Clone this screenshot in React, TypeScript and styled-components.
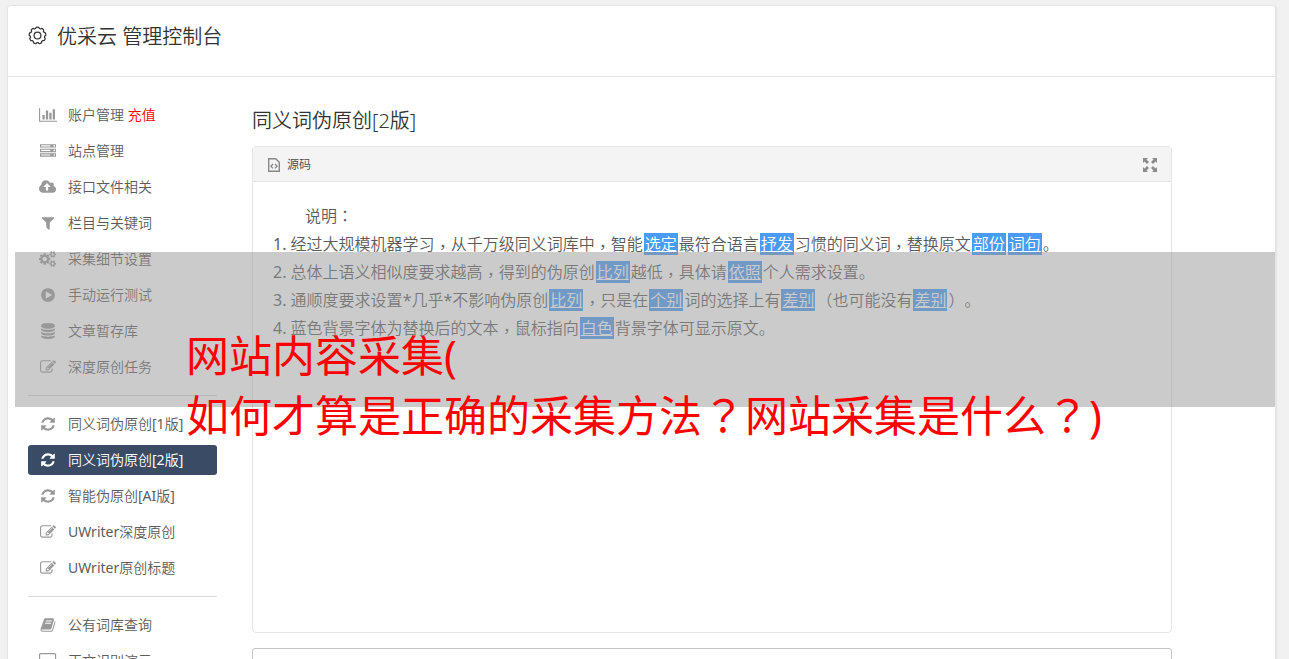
import React from "react";
import styled, { createGlobalStyle } from "styled-components";

const Global = createGlobalStyle`
  * { box-sizing: border-box; }
  html, body, #root { height: 100%; }
  body {
    margin: 0;
    overflow: hidden;
    background: #f1f1f1;
    color: #5c5c5c;
    font-family: "Noto Sans", "Noto Sans CJK SC", sans-serif;
    font-size: 14px;
    font-weight: 350;
    text-spacing-trim: space-all;
  }
`;

const Page = styled.div`
  height: 100%;
  padding: 5px 12px 0 7px;
  overflow: hidden;
`;

const Panel = styled.div`
  min-height: 100%;
  background: #fff;
  border: 1px solid #e5e5e5;
  border-right-width: 2px;
  border-radius: 4px 4px 0 0;
`;

const Header = styled.header`
  display: flex;
  align-items: flex-start;
  gap: 10px;
  height: 71px;
  padding: 16px 20px;
  border-bottom: 1px solid #e5e5e5;
  color: #333;
`;

const HeaderIcon = styled.svg`
  width: 19px;
  height: 27px;
`;

const Title = styled.h1`
  margin: 0;
  font-size: 20px;
  line-height: 30px;
  font-weight: 350;
`;

const Body = styled.div`
  display: flex;
  gap: 35px;
  padding: 23px 103px 0 20px;
`;

const Sidebar = styled.nav`
  flex: 0 0 189px;
`;

const Menu = styled.ul`
  display: flex;
  flex-direction: column;
  gap: 6px;
  margin: 0;
  padding: 0;
  list-style: none;

  & + & {
    margin-top: 13px;
    padding-top: 13px;
    border-top: 1px solid #d9d9d9;
  }
`;

const MenuLink = styled.a<{ $active?: boolean }>`
  display: flex;
  align-items: center;
  gap: 10px;
  height: 30px;
  padding: 0 10px;
  border-radius: 3px;
  background: ${(p) => (p.$active ? "#3a4b66" : "transparent")};
  color: ${(p) => (p.$active ? "#fff" : "#5c5c5c")};
  text-decoration: none;
  white-space: nowrap;

  svg { color: ${(p) => (p.$active ? "#fff" : "#999")}; }
`;

const Label = styled.span`
  padding-bottom: 2px;
`;

const IconBox = styled.span`
  display: flex;
  flex: 0 0 20px;
  justify-content: center;
  svg { height: 16px; fill: currentColor; }
`;

const Accent = styled.span`
  color: #f00;
`;

const Main = styled.main`
  flex: 1;
  min-width: 0;
`;

const SectionTitle = styled.h2`
  margin: 6px 0 10px;
  color: #333;
  font-size: 20px;
  line-height: 30px;
  font-weight: 350;
`;

const Editor = styled.section`
  border: 1px solid #e5e5e5;
  border-radius: 4px;
`;

const Toolbar = styled.div`
  display: flex;
  justify-content: space-between;
  align-items: center;
  height: 35px;
  padding: 0 13px 0 14px;
  background: #f4f4f4;
  border-bottom: 1px solid #e5e5e5;
`;

const ToolButton = styled.button`
  display: flex;
  align-items: center;
  gap: 4px;
  padding: 2px 0 0;
  border: 0;
  background: none;
  color: #484848;
  font: inherit;
  font-size: 12px;
  line-height: 16px;
  svg { width: 16px; height: 16px; }
`;

const Content = styled.div`
  height: 450px;
  padding: 20px;
  font-size: 16px;
  line-height: 28px;
  white-space: nowrap;
`;

const Lead = styled.p`
  margin: 0;
  padding-left: 32px;
`;

const Steps = styled.ol`
  margin: 0;
  padding: 0;
  list-style: none;
`;

const Swap = styled.span`
  margin: 0 1px;
  padding: 0 1px;
  background: #4a9bf5;
  color: #fff;
  text-decoration: underline;
`;

const CenteredMark = styled.span<{ $low?: boolean }>`
  font-family: "Noto Sans CJK TC", sans-serif;
  line-height: 1;
  vertical-align: ${(p) => (p.$low ? "-3px" : "baseline")};
`;

const Latin = styled.span`
  font-weight: 400;
`;

const Output = styled.textarea`
  display: block;
  width: 100%;
  height: 60px;
  margin-top: 15px;
  border: 1px solid #c4c4c4;
  border-radius: 3px;
  background: #fff;
  resize: none;
`;

const Banner = styled.div`
  position: absolute;
  top: 252px;
  left: 15px;
  right: 14px;
  height: 155px;
  padding: 74px 0 0 171px;
  background: rgba(152, 152, 152, 0.5);
  color: #f00;
  font-size: 43px;
  font-weight: 400;
  line-height: 60px;
  white-space: nowrap;
  p { margin: 0; }
`;

// Sets full-width marks in the face that centres them in their cells,
// and Latin runs in the regular weight.
function Text({ children }: { children: string }) {
  return (
    <>
      {children.split(/([，：？]|[\x21-\x7e]+)/).map((part, i) => {
        if (i % 2 === 0) return part;
        return /[，：？]/.test(part) ? (
          <CenteredMark key={i} $low={part === "，"}>{part}</CenteredMark>
        ) : (
          <Latin key={i}>{part}</Latin>
        );
      })}
    </>
  );
}

type Glyph = { width: number; d: string };

const glyphs: Record<string, Glyph> = {
  chart: { width: 2048, d: "M640 896v512h-256v-512h256zm384-512v1024h-256v-1024h256zm1024 1152v128h-2048v-1536h128v1408h1920zm-640-896v768h-256v-768h256zm384-384v1152h-256v-1152h256z" },
  server: { width: 1792, d: "M128 1408h1024v-128h-1024v128zm0-512h1024v-128h-1024v128zm1568 448q0-40-28-68t-68-28-68 28-28 68 28 68 68 28 68-28 28-68zm-1568-960h1024v-128h-1024v128zm1568 448q0-40-28-68t-68-28-68 28-28 68 28 68 68 28 68-28 28-68zm0-512q0-40-28-68t-68-28-68 28-28 68 28 68 68 28 68-28 28-68zm96 832v384h-1792v-384h1792zm0-512v384h-1792v-384h1792zm0-512v384h-1792v-384h1792z" },
  upload: { width: 1920, d: "M1280 864q0-14-9-23l-352-352q-9-9-23-9t-23 9l-351 351q-10 12-10 24 0 14 9 23t23 9h224v352q0 13 9.5 22.5t22.5 9.5h192q13 0 22.5-9.5t9.5-22.5v-352h224q13 0 22.5-9.5t9.5-22.5zm640 288q0 159-112.5 271.5t-271.5 112.5h-1088q-185 0-316.5-131.5t-131.5-316.5q0-130 70-240t188-165q-2-30-2-43 0-212 150-362t362-150q156 0 285.5 87t188.5 231q71-62 166-62 106 0 181 75t75 181q0 76-41 138 130 31 213.5 135.5t83.5 238.5z" },
  filter: { width: 1792, d: "M1595 295q17 41-14 70l-493 493v742q0 42-39 59-13 5-25 5-27 0-45-19l-256-256q-19-19-19-45v-486l-493-493q-31-29-14-70 17-39 59-39h1280q42 0 59 39z" },
  cogs: { width: 1920, d: "M896 896q0-106-75-181t-181-75-181 75-75 181 75 181 181 75 181-75 75-181zm768 512q0-52-38-90t-90-38-90 38-38 90q0 53 37.5 90.5t90.5 37.5 90.5-37.5 37.5-90.5zm0-1024q0-52-38-90t-90-38-90 38-38 90q0 53 37.5 90.5t90.5 37.5 90.5-37.5 37.5-90.5zm-384 421v185q0 10-7 19.5t-16 10.5l-155 24q-11 35-32 76 34 48 90 115 7 11 7 20 0 12-7 19-23 30-82.5 89.5t-78.5 59.5q-11 0-21-7l-115-90q-37 19-77 31-11 108-23 155-7 24-30 24h-186q-11 0-20-7.5t-10-17.5l-23-153q-34-10-75-31l-118 89q-7 7-20 7-11 0-21-8-144-133-144-160 0-9 7-19 10-14 41-53t47-61q-23-44-35-82l-152-24q-10-1-17-9.5t-7-19.5v-185q0-10 7-19.5t16-10.5l155-24q11-35 32-76-34-48-90-115-7-11-7-20 0-12 7-20 22-30 82-89t79-59q11 0 21 7l115 90q34-18 77-32 11-108 23-154 7-24 30-24h186q11 0 20 7.5t10 17.5l23 153q34 10 75 31l118-89q8-7 20-7 11 0 21 8 144 133 144 160 0 8-7 19-12 16-42 54t-45 60q23 48 34 82l152 23q10 2 17 10.5t7 19.5zm640 533v140q0 16-149 31-12 27-30 52 51 113 51 138 0 4-4 7-122 71-124 71-8 0-46-47t-52-68q-20 2-30 2t-30-2q-14 21-52 68t-46 47q-2 0-124-71-4-3-4-7 0-25 51-138-18-25-30-52-149-15-149-31v-140q0-16 149-31 13-29 30-52-51-113-51-138 0-4 4-7 4-2 35-20t59-34 30-16q8 0 46 46.5t52 67.5q20-2 30-2t30 2q51-71 92-112l6-2q4 0 124 70 4 3 4 7 0 25-51 138 17 23 30 52 149 15 149 31zm0-1024v140q0 16-149 31-12 27-30 52 51 113 51 138 0 4-4 7-122 71-124 71-8 0-46-47t-52-68q-20 2-30 2t-30-2q-14 21-52 68t-46 47q-2 0-124-71-4-3-4-7 0-25 51-138-18-25-30-52-149-15-149-31v-140q0-16 149-31 13-29 30-52-51-113-51-138 0-4 4-7 4-2 35-20t59-34 30-16q8 0 46 46.5t52 67.5q20-2 30-2t30 2q51-71 92-112l6-2q4 0 124 70 4 3 4 7 0 25-51 138 17 23 30 52 149 15 149 31z" },
  play: { width: 1792, d: "M896 128q209 0 385.5 103t279.5 279.5 103 385.5-103 385.5-279.5 279.5-385.5 103-385.5-103-279.5-279.5-103-385.5 103-385.5 279.5-279.5 385.5-103zm384 823q32-18 32-55t-32-55l-544-320q-31-19-64-1-32 19-32 56v640q0 37 32 56 16 8 32 8 17 0 32-9z" },
  database: { width: 1792, d: "M896 768q237 0 443-43t325-127v170q0 69-103 128t-280 93.5-385 34.5-385-34.5-280-93.5-103-128v-170q119 84 325 127t443 43zm0 768q237 0 443-43t325-127v170q0 69-103 128t-280 93.5-385 34.5-385-34.5-280-93.5-103-128v-170q119 84 325 127t443 43zm0-384q237 0 443-43t325-127v170q0 69-103 128t-280 93.5-385 34.5-385-34.5-280-93.5-103-128v-170q119 84 325 127t443 43zm0-1152q208 0 385 34.5t280 93.5 103 128v128q0 69-103 128t-280 93.5-385 34.5-385-34.5-280-93.5-103-128v-128q0-69 103-128t280-93.5 385-34.5z" },
  edit: { width: 1792, d: "M888 1184l116-116-152-152-116 116v56h96v96h56zm440-720q-16-16-33 1l-350 350q-17 17-1 33t33-1l350-350q17-17 1-33zm80 594v190q0 119-84.5 203.5t-203.5 84.5h-832q-119 0-203.5-84.5t-84.5-203.5v-832q0-119 84.5-203.5t203.5-84.5h832q63 0 117 25 15 7 18 23 3 17-9 29l-49 49q-14 14-32 8-23-6-45-6h-832q-66 0-113 47t-47 113v832q0 66 47 113t113 47h832q66 0 113-47t47-113v-126q0-13 9-22l64-64q15-15 35-7t20 29zm-96-738l288 288-672 672h-288v-288zm444 132l-92 92-288-288 92-92q28-28 68-28t68 28l152 152q28 28 28 68t-28 68z" },
  refresh: { width: 1792, d: "M1639 1056q0 5-1 7-64 268-268 434.5t-478 166.5q-146 0-282.5-55t-243.5-157l-129 129q-19 19-45 19t-45-19-19-45v-448q0-26 19-45t45-19h448q26 0 45 19t19 45-19 45l-137 137q71 66 161 102t187 36q134 0 250-65t186-179q11-17 53-117 8-23 30-23h192q13 0 22.5 9.5t9.5 22.5zm25-800v448q0 26-19 45t-45 19h-448q-26 0-45-19t-19-45 19-45l138-138q-148-137-349-137-134 0-250 65t-186 179q-11 17-53 117-8 23-30 23h-199q-13 0-22.5-9.5t-9.5-22.5v-7q65-268 270-434.5t480-166.5q146 0 284 55.5t245 156.5l130-129q19-19 45-19t45 19 19 45z" },
  book: { width: 1792, d: "M1703 478q40 57 18 129l-275 906q-19 64-76.5 107.5t-122.5 43.5h-923q-77 0-148.5-53.5t-99.5-131.5q-24-67-2-127 0-4 3-27t4-37q1-8-3-21.5t-3-19.5q2-11 8-21t16.5-23.5 16.5-23.5q23-38 45-91.5t30-91.5q3-10 .5-30t-.5-28q3-11 17-28t17-23q21-36 42-92t25-90q1-9-2.5-32t.5-28q4-13 22-30.5t22-22.5q19-26 42.5-84.5t27.5-96.5q1-8-3-25.5t-2-26.5q2-8 9-18t18-23 17-21q8-12 16.5-30.5t15-35 16-36 19.5-32 26.5-23.5 36-11.5 47.5 5.5l-1 3q38-9 51-9h761q74 0 114 56t18 130l-274 906q-36 119-71.5 153.5t-128.5 34.5h-869q-27 0-38 15-11 16-1 43 24 70 144 70h923q29 0 56-15.5t35-41.5l300-987q7-22 5-57 38 15 59 43zm-1064 2q-4 13 2 22.5t20 9.5h608q13 0 25.5-9.5t16.5-22.5l21-64q4-13-2-22.5t-20-9.5h-608q-13 0-25.5 9.5t-16.5 22.5zm-83 256q-4 13 2 22.5t20 9.5h608q13 0 25.5-9.5t16.5-22.5l21-64q4-13-2-22.5t-20-9.5h-608q-13 0-25.5 9.5t-16.5 22.5z" },
  screen: { width: 1920, d: "M160 0h1600q66 0 113 47t47 113v1088q0 66-47 113t-113 47h-736v128h352v128h-832v-128h352v-128h-736q-66 0-113-47t-47-113v-1088q0-66 47-113t113-47zm0 128q-32 0-32 32v1088q0 32 32 32h1600q32 0 32-32v-1088q0-32-32-32z" },
};

function Icon({ name }: { name: string }) {
  const g = glyphs[name];
  return (
    <IconBox>
      <svg viewBox={`0 0 ${g.width} 1792`} aria-hidden="true">
        <path d={g.d} />
      </svg>
    </IconBox>
  );
}

const groups = [
  [
    { icon: "chart", label: "账户管理", accent: "充值" },
    { icon: "server", label: "站点管理" },
    { icon: "upload", label: "接口文件相关" },
    { icon: "filter", label: "栏目与关键词" },
    { icon: "cogs", label: "采集细节设置" },
    { icon: "play", label: "手动运行测试" },
    { icon: "database", label: "文章暂存库" },
    { icon: "edit", label: "深度原创任务" },
  ],
  [
    { icon: "refresh", label: "同义词伪原创[1版]" },
    { icon: "refresh", label: "同义词伪原创[2版]", active: true },
    { icon: "refresh", label: "智能伪原创[AI版]" },
    { icon: "edit", label: "UWriter深度原创" },
    { icon: "edit", label: "UWriter原创标题" },
  ],
  [
    { icon: "book", label: "公有词库查询" },
    { icon: "screen", label: "正文识别演示" },
  ],
] as { icon: string; label: string; accent?: string; active?: boolean }[][];

// Odd entries of each line are the replaced words.
const steps = [
  ["1. 经过大规模机器学习，从千万级同义词库中，智能", "选定", "最符合语言", "抒发", "习惯的同义词，替换原文", "部份", "", "词句", "。"],
  ["2. 总体上语义相似度要求越高，得到的伪原创", "比列", "越低，具体请", "依照", "个人需求设置。"],
  ["3. 通顺度要求设置*几乎*不影响伪原创", "比列", "，只是在", "个别", "词的选择上有", "差别", "（也可能没有", "差别", "）。"],
  ["4. 蓝色背景字体为替换后的文本，鼠标指向", "白色", "背景字体可显示原文。"],
];

const lobes = Array.from({ length: 9 }, (_, i) => {
  const at = (deg: number, r: number) => {
    const a = ((deg - 90) * Math.PI) / 180;
    return `${(10 + r * Math.cos(a)).toFixed(2)} ${(10 + r * Math.sin(a)).toFixed(2)}`;
  };
  const c = i * 40;
  return `${i ? "L" : "M"}${at(c - 15, 7.6)}L${at(c - 9, 8.7)}Q${at(c, 9.2)} ${at(c + 9, 8.7)}L${at(c + 15, 7.6)}`;
}).join("") + "Z";

export default function App() {
  return (
    <>
      <Global />
      <Page>
        <Panel>
          <Header>
            <HeaderIcon viewBox="0 0 20 20" fill="none" stroke="currentColor" strokeWidth="1.3" strokeLinejoin="round" aria-hidden="true">
              <path d={lobes} />
              <circle cx="10" cy="10" r="3.6" />
            </HeaderIcon>
            <Title>优采云 管理控制台</Title>
          </Header>
          <Body>
            <Sidebar>
              {groups.map((items, g) => (
                <Menu key={g}>
                  {items.map((item) => (
                    <li key={item.label}>
                      <MenuLink href="#" $active={item.active}>
                        <Icon name={item.icon} />
                        <Label>
                          <Text>{item.label}</Text>
                          {item.accent && <Accent> {item.accent}</Accent>}
                        </Label>
                      </MenuLink>
                    </li>
                  ))}
                </Menu>
              ))}
            </Sidebar>
            <Main>
              <SectionTitle>同义词伪原创[2版]</SectionTitle>
              <Editor>
                <Toolbar>
                  <ToolButton type="button">
                    <svg viewBox="0 0 16 16" fill="none" stroke="#888" aria-hidden="true">
                      <path strokeWidth="1.4" d="M1.7 1.7h7l3.6 3.6v8.9H1.7z" />
                      <path strokeWidth="1.3" d="M6 7L3.9 9.2 6 11.4M8 7l2.1 2.2L8 11.4" />
                    </svg>
                    源码
                  </ToolButton>
                  <ToolButton type="button" aria-label="最大化">
                    <svg viewBox="0 0 16 16" fill="#8b8b8b" aria-hidden="true">
                      <path d="M1 1h5L4.5 2.5 7 5 5 7 2.5 4.5 1 6zM15 1v5l-1.5-1.5L11 7 9 5l2.5-2.5L10 1zM1 15v-5l1.5 1.5L5 9l2 2-2.5 2.5L6 15zM15 15h-5l1.5-1.5L9 11l2-2 2.5 2.5L15 10z" />
                    </svg>
                  </ToolButton>
                </Toolbar>
                <Content>
                  <Lead><Text>说明：</Text></Lead>
                  <Steps>
                    {steps.map((line, l) => (
                      <li key={l}>
                        {line.map((part, i) =>
                          i % 2 ? <Swap key={i}>{part}</Swap> : <Text key={i}>{part}</Text>
                        )}
                      </li>
                    ))}
                  </Steps>
                </Content>
              </Editor>
              <Output aria-label="原文" />
            </Main>
          </Body>
        </Panel>
      </Page>
      <Banner>
        <p>网站内容采集(</p>
        <p><Text>如何才算是正确的采集方法？网站采集是什么？)</Text></p>
      </Banner>
    </>
  );
}
